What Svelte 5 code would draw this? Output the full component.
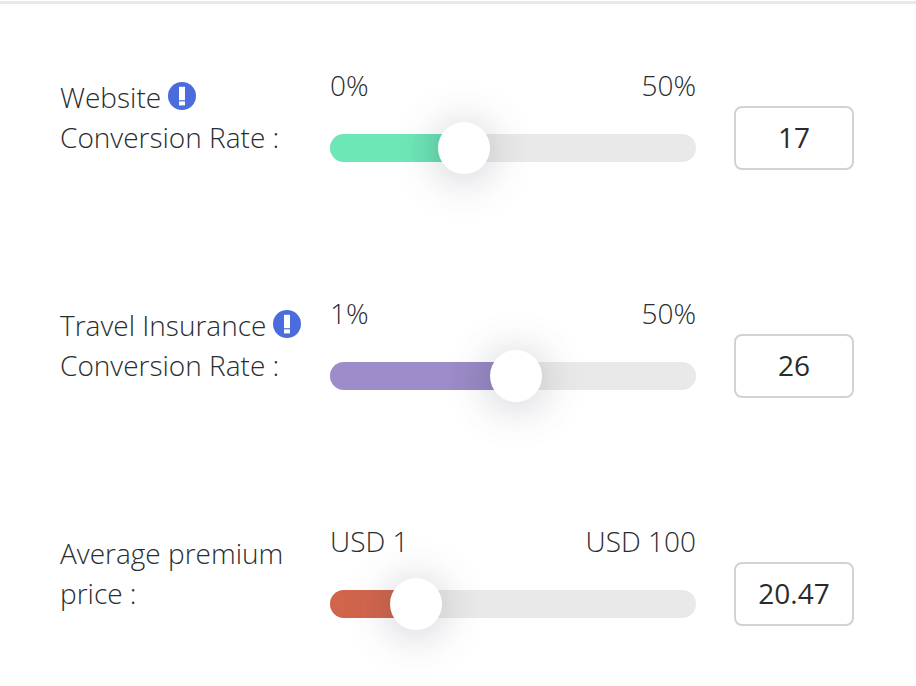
<script>
  const rows = [
    { label: 'Website', label2: 'Conversion Rate :', info: true, min: '0%', max: '50%', value: '17', thumb: 134, color: '#6ee7b7', end: '#5fd5a8' },
    { label: 'Travel Insurance', label2: 'Conversion Rate :', info: true, min: '1%', max: '50%', value: '26', thumb: 186, color: '#9d8cc9', end: '#9384bf' },
    { label: 'Average premium', label2: 'price :', info: false, min: 'USD 1', max: 'USD 100', value: '20.47', thumb: 86, color: '#d1654c', end: '#c55f49' }
  ];
</script>

<div class="page">
  {#each rows as row}
    <div class="row">
      <div class="label">
        <div class="line">
          {row.label}
          {#if row.info}
            <svg class="info" width="28" height="28" viewBox="0 0 28 28" aria-hidden="true">
              <circle cx="14" cy="14" r="14" fill="#4a6cdc" />
              <rect x="11" y="4.8" width="6" height="13.4" fill="#fff" />
              <rect x="11" y="19.4" width="6" height="4" fill="#fff" />
            </svg>
          {/if}
        </div>
        <div class="line">{row.label2}</div>
      </div>

      <div class="slider">
        <div class="range">
          <span>{row.min}</span>
          <span>{row.max}</span>
        </div>
        <div class="track">
          <div class="fill" style="width: {row.thumb}px; background: linear-gradient(90deg, {row.color} 60%, {row.end})"></div>
          <div class="thumb" style="left: {row.thumb}px"></div>
        </div>
      </div>

      <div class="value">{row.value}</div>
    </div>
  {/each}
</div>

<style>
  :global(body) {
    background: #fff;
  }

  .page {
    height: 686px;
    box-sizing: border-box;
    border-top: 3px solid #e9e9e9;
    margin-top: 1px;
    padding: 74px 62px 0 60px;
    font-family: "Open Sans", sans-serif;
    font-weight: 300;
    font-size: 28px;
    color: #2a2d30;
    overflow: hidden;
  }

  .row {
    display: flex;
    height: 228px;
    align-items: flex-start;
  }

  .label {
    width: 270px;
    flex: none;
    margin-top: -1px;
  }

  .line {
    display: flex;
    align-items: center;
    gap: 7px;
    height: 40px;
    white-space: nowrap;
  }

  .info {
    flex: none;
    margin-top: -3px;
  }

  .slider {
    width: 366px;
    flex: none;
    margin-top: -13px;
  }

  .range {
    display: flex;
    justify-content: space-between;
    height: 40px;
    line-height: 40px;
    margin-bottom: 29px;
  }

  .track {
    position: relative;
    height: 28px;
    border-radius: 14px;
    background: #e9e9e9;
  }

  .fill {
    height: 100%;
    border-radius: 14px 0 0 14px;
  }

  .thumb {
    position: absolute;
    top: 50%;
    width: 52px;
    height: 52px;
    border-radius: 50%;
    background: #fff;
    transform: translate(-50%, -50%);
    box-shadow: 0 4px 44px rgba(60, 66, 87, 0.3);
  }

  .value {
    width: 120px;
    height: 64px;
    flex: none;
    box-sizing: border-box;
    margin: 28px 0 0 38px;
    padding-bottom: 2px;
    border: 2px solid #d2d2d2;
    border-radius: 8px;
    font-weight: 400;
    display: flex;
    align-items: center;
    justify-content: center;
    color: #2b2b2b;
  }
</style>
